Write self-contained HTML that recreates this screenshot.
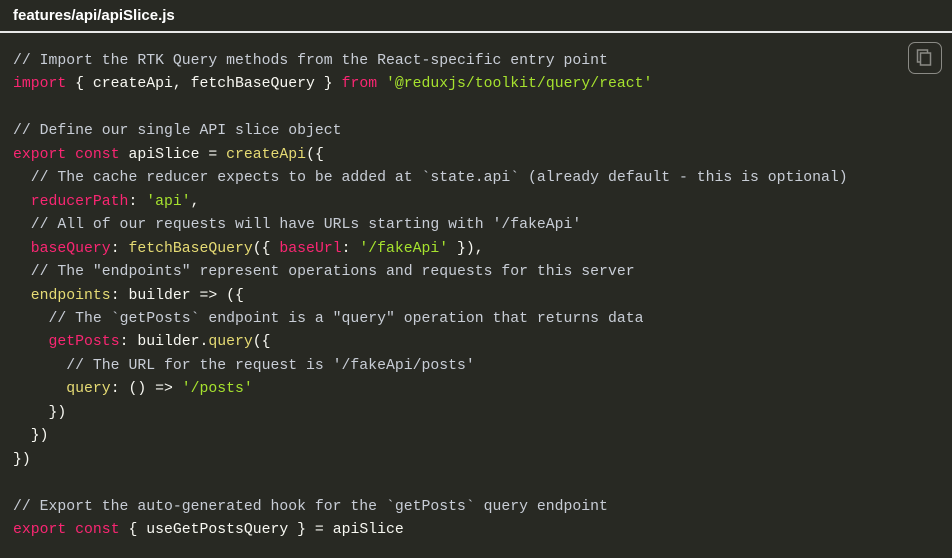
<!DOCTYPE html>
<html><head><style>
body{margin:0;width:952px;height:558px;background:#282923;overflow:hidden}
.hd{height:31px;border-bottom:2px solid #e8e8e8;color:#fff;font:bold 15px "Liberation Sans",sans-serif;line-height:32px;padding-left:13px;box-sizing:border-box;height:33px}
pre{margin:0;position:absolute;top:50px;left:13px;font:14.8px/23.45px "Liberation Mono",monospace;color:#f8f8f2}
.c{color:#c8cdd6}.k{color:#f92672}.s{color:#a6e22e}.f{color:#e6db74}
.cp{position:absolute;left:908px;top:42px;width:34px;height:32px;border:1.5px solid #8a8a85;border-radius:7px;box-sizing:border-box}
</style></head><body>
<div class="hd">features/api/apiSlice.js</div>
<div class="cp"><svg width="31" height="29" viewBox="0 0 31 29"><rect x="8.5" y="7" width="10" height="12" fill="none" stroke="#8a8a85" stroke-width="1.5"/><rect x="11.5" y="10" width="10" height="12" fill="#282923" stroke="#8a8a85" stroke-width="1.5"/></svg></div>
<pre><span class="c">// Import the RTK Query methods from the React-specific entry point</span>
<span class="k">import</span> { createApi, fetchBaseQuery } <span class="k">from</span> <span class="s">'@reduxjs/toolkit/query/react'</span>

<span class="c">// Define our single API slice object</span>
<span class="k">export</span> <span class="k">const</span> apiSlice = <span class="f">createApi</span>({
  <span class="c">// The cache reducer expects to be added at `state.api` (already default - this is optional)</span>
  <span class="k">reducerPath</span>: <span class="s">'api'</span>,
  <span class="c">// All of our requests will have URLs starting with '/fakeApi'</span>
  <span class="k">baseQuery</span>: <span class="f">fetchBaseQuery</span>({ <span class="k">baseUrl</span>: <span class="s">'/fakeApi'</span> }),
  <span class="c">// The "endpoints" represent operations and requests for this server</span>
  <span class="f">endpoints</span>: builder =&gt; ({
    <span class="c">// The `getPosts` endpoint is a "query" operation that returns data</span>
    <span class="k">getPosts</span>: builder.<span class="f">query</span>({
      <span class="c">// The URL for the request is '/fakeApi/posts'</span>
      <span class="f">query</span>: () =&gt; <span class="s">'/posts'</span>
    })
  })
})

<span class="c">// Export the auto-generated hook for the `getPosts` query endpoint</span>
<span class="k">export</span> <span class="k">const</span> { useGetPostsQuery } = apiSlice</pre>
</body></html>
